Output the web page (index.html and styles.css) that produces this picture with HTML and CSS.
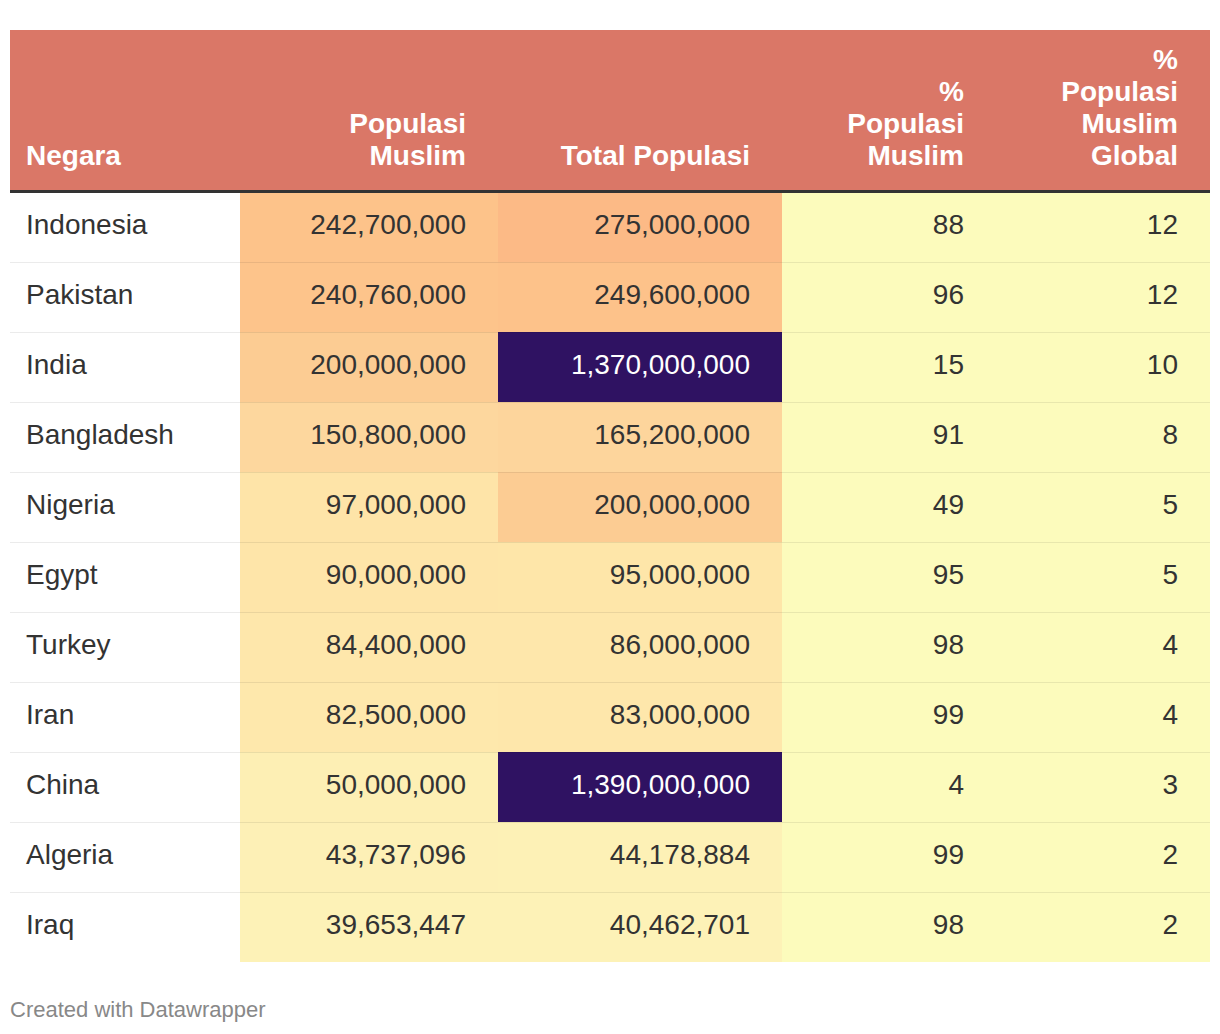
FILE: index.html
```html
<!DOCTYPE html>
<html lang="id">
<head>
<meta charset="utf-8">
<title>Populasi Muslim</title>
<link rel="stylesheet" href="styles.css">
</head>
<body>
<div class="chart">
  <table class="tbl">
    <colgroup>
      <col class="c1"><col class="c2"><col class="c3"><col class="c4"><col class="c5">
    </colgroup>
    <thead>
      <tr>
        <th class="left">Negara</th>
        <th>Populasi<br>Muslim</th>
        <th>Total Populasi</th>
        <th>%<br>Populasi<br>Muslim</th>
        <th>%<br>Populasi<br>Muslim<br>Global</th>
      </tr>
    </thead>
    <tbody>
      <tr>
        <td class="left">Indonesia</td>
        <td class="m1">242,700,000</td>
        <td class="t1">275,000,000</td>
        <td class="y">88</td>
        <td class="y">12</td>
      </tr>
      <tr>
        <td class="left">Pakistan</td>
        <td class="m2">240,760,000</td>
        <td class="t2">249,600,000</td>
        <td class="y">96</td>
        <td class="y">12</td>
      </tr>
      <tr>
        <td class="left">India</td>
        <td class="m3">200,000,000</td>
        <td class="dark">1,370,000,000</td>
        <td class="y">15</td>
        <td class="y">10</td>
      </tr>
      <tr>
        <td class="left">Bangladesh</td>
        <td class="m4">150,800,000</td>
        <td class="t4">165,200,000</td>
        <td class="y">91</td>
        <td class="y">8</td>
      </tr>
      <tr>
        <td class="left">Nigeria</td>
        <td class="m5">97,000,000</td>
        <td class="t5">200,000,000</td>
        <td class="y">49</td>
        <td class="y">5</td>
      </tr>
      <tr>
        <td class="left">Egypt</td>
        <td class="m6">90,000,000</td>
        <td class="t6">95,000,000</td>
        <td class="y">95</td>
        <td class="y">5</td>
      </tr>
      <tr>
        <td class="left">Turkey</td>
        <td class="m7">84,400,000</td>
        <td class="t7">86,000,000</td>
        <td class="y">98</td>
        <td class="y">4</td>
      </tr>
      <tr>
        <td class="left">Iran</td>
        <td class="m8">82,500,000</td>
        <td class="t8">83,000,000</td>
        <td class="y">99</td>
        <td class="y">4</td>
      </tr>
      <tr>
        <td class="left">China</td>
        <td class="m9">50,000,000</td>
        <td class="dark">1,390,000,000</td>
        <td class="y">4</td>
        <td class="y">3</td>
      </tr>
      <tr>
        <td class="left">Algeria</td>
        <td class="m10">43,737,096</td>
        <td class="t10">44,178,884</td>
        <td class="y">99</td>
        <td class="y">2</td>
      </tr>
      <tr>
        <td class="left">Iraq</td>
        <td class="m11">39,653,447</td>
        <td class="t11">40,462,701</td>
        <td class="y">98</td>
        <td class="y">2</td>
      </tr>
    </tbody>
  </table>
  <div class="footer">Created with Datawrapper</div>
</div>
</body>
</html>
```
FILE: styles.css
```css
html, body {
  margin: 0;
  padding: 0;
  background: #ffffff;
}

.chart {
  padding: 30px 10px 0 10px;
  font-family: "Liberation Sans", Arial, Helvetica, sans-serif;
  color: #333333;
}

.tbl {
  width: 1200px;
  table-layout: fixed;
  border-collapse: separate;
  border-spacing: 0;
}

.c1 { width: 230px; }
.c2 { width: 258px; }
.c3 { width: 284px; }
.c4 { width: 214px; }
.c5 { width: 214px; }

.tbl th {
  background: #da7767;
  color: #ffffff;
  font-weight: bold;
  font-size: 28px;
  line-height: 32px;
  text-align: right;
  vertical-align: bottom;
  padding: 14px 32px 18px 16px;
  border-bottom: 3px solid #333333;
}

.tbl td {
  font-size: 28px;
  line-height: 32px;
  text-align: right;
  vertical-align: top;
  padding: 16px 32px 21px 16px;
  border-top: 1px solid rgba(0, 0, 0, 0.08);
  white-space: nowrap;
}

.tbl tbody tr:first-child td {
  border-top: 0;
}

.tbl .left {
  text-align: left;
}

.m1 { background: #fdc38a; }
.m2 { background: #fdc48b; }
.m3 { background: #fccc93; }
.m4 { background: #fdd79e; }
.m5 { background: #fee4a8; }
.m6 { background: #fee5a9; }
.m7 { background: #fee7ab; }
.m8 { background: #fee8ac; }
.m9 { background: #fdefb4; }
.m10 { background: #fdf0b6; }
.m11 { background: #fdf2b7; }

.t1 { background: #fcba86; }
.t2 { background: #fdc28a; }
.t4 { background: #fdd59c; }
.t5 { background: #fccc93; }
.t6 { background: #fee6a9; }
.t7 { background: #fee7ab; }
.t8 { background: #fee7ab; }
.t10 { background: #fdf1b6; }
.t11 { background: #fdf2b7; }

.tbl td.dark {
  background: #2f1262;
  color: #ffffff;
}

.y { background: #fcfbbc; }

.footer {
  margin-top: 35px;
  font-size: 22px;
  line-height: 26px;
  color: #888888;
}
```
